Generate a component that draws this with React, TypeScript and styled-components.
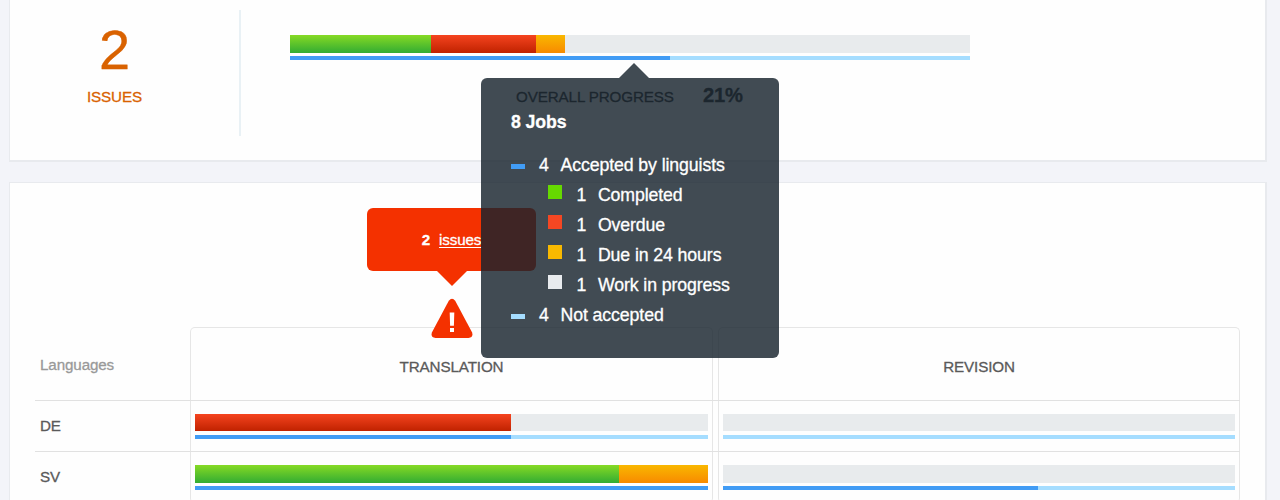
import React from "react";
import styled, { createGlobalStyle } from "styled-components";

const GlobalStyle = createGlobalStyle`
  * { box-sizing: border-box; }
  body {
    margin: 0;
    background: #f3f4f9;
    font-family: "Liberation Sans", Arial, Helvetica, sans-serif;
    font-size: 15.2px;
    letter-spacing: -0.12px;
    color: #5a5a5a;
    -webkit-text-stroke: 0.3px currentColor;
  }
`;

const fills = {
  done: "linear-gradient(#86da24, #32ac33)",
  late: "linear-gradient(#f5441f, #c02200)",
  soon: "linear-gradient(#f9b700, #f88a00)",
  open: "#e8ebed",
  accepted: "#419cf5",
  pending: "#a5ddff",
};
type Fill = keyof typeof fills;
type Part = [Fill, number];

const Page = styled.div`
  position: relative;
  height: 500px;
  overflow: hidden;
  padding: 0 13px 0 9px;
`;

const Card = styled.section`
  background: #fefefe;
  border: solid #e8eaee;
  border-width: 1px 2px 2px 1px;
`;

const SummaryCard = styled(Card)`
  display: flex;
  height: 162px;
  border-top: 0;
  padding-top: 10px;
`;

const IssueCount = styled.div`
  width: 231px;
  height: 126px;
  padding-right: 20px;
  border-right: 2px solid #e9f1f5;
  text-align: center;
  color: #d96200;
`;

const BigNumber = styled.div`
  font-size: 56px;
  line-height: 64px;
  padding-top: 8px;
  letter-spacing: 0;
`;

const IssueLabel = styled.div`
  line-height: 18px;
  margin-top: 6px;
`;

const Overall = styled.div`
  width: 680px;
  margin: 25px 0 0 49px;
`;

const OverallCaption = styled.div`
  display: flex;
  align-items: baseline;
  gap: 29px;
  margin: 23px 0 0 226px;
  line-height: 24px;
  color: #333;
  white-space: nowrap;
`;

const Percent = styled.strong`
  font-size: 20.2px;
`;

const Track = styled.div<{ $height: number }>`
  display: flex;
  height: ${(p) => p.$height}px;
`;

const Segment = styled.div<{ $fill: Fill; $grow: number }>`
  flex: ${(p) => p.$grow} 1 0;
  background: ${(p) => fills[p.$fill]};
`;

const BarPair = styled.div`
  display: flex;
  flex-direction: column;
  gap: 3.6px;
`;

function Progress({ work, acceptance }: { work: Part[]; acceptance: Part[] }) {
  return (
    <BarPair>
      <Track $height={17.75}>
        {work.map(([fill, grow]) => <Segment key={fill} $fill={fill} $grow={grow} />)}
      </Track>
      <Track $height={3.8}>
        {acceptance.map(([fill, grow]) => <Segment key={fill} $fill={fill} $grow={grow} />)}
      </Track>
    </BarPair>
  );
}

const TableCard = styled(Card)`
  height: 340px;
  margin-top: 20px;
  padding: 144px 0 0 25px;
`;

const Row = styled.div<{ $height: number; $line?: boolean }>`
  display: grid;
  grid-template-columns: 155px 523px 5px 522px;
  width: 1205px;
  height: ${(p) => p.$height}px;
  border-top: ${(p) => (p.$line ? "1px solid #e1e1e1" : "0")};
`;

const RowLabel = styled.div<{ $muted?: boolean }>`
  padding: ${(p) => (p.$muted ? "29px 0 0 5px" : "16px 0 0 5px")};
  line-height: 18px;
  color: ${(p) => (p.$muted ? "#999" : "#5a5a5a")};
`;

const Cell = styled.div<{ $last?: boolean }>`
  padding: 12.5px 4px 0;
  border: solid #e6e6e6;
  border-width: ${(p) => (p.$last ? "0 1px 1px" : "0 1px")};
  border-radius: ${(p) => (p.$last ? "0 0 5px 5px" : "0")};
`;

const HeadCell = styled(Cell)`
  padding-top: 30px;
  border-top-width: 1px;
  border-radius: 5px 5px 0 0;
  line-height: 18px;
  text-align: center;
`;

const Callout = styled.div`
  position: absolute;
  left: 367px;
  top: 208px;
  width: 169px;
  height: 62.5px;
  padding-top: 23px;
  border-radius: 6px;
  background: #f43100;
  color: #fff;
  line-height: 18px;
  display: flex;
  justify-content: center;
  gap: 9px;
  &::after {
    content: "";
    position: absolute;
    left: 69px;
    top: 62px;
    border: solid transparent;
    border-width: 16px 16px 0;
    border-top-color: #f43100;
  }
`;

const IssueLink = styled.a`
  text-decoration: underline;
  text-underline-offset: 2px;
  text-decoration-skip-ink: none;
`;

const Warning = styled.svg`
  position: absolute;
  left: 431px;
  top: 298px;
`;

const Tooltip = styled.div`
  position: absolute;
  left: 481px;
  top: 78px;
  width: 298px;
  height: 280px;
  padding: 29px 0 0 30px;
  border-radius: 6px;
  background: rgba(23, 35, 45, 0.82);
  color: #fff;
  font-size: 17.7px;
  letter-spacing: -0.09px;
  line-height: 30px;
  &::before {
    content: "";
    position: absolute;
    left: 137.5px;
    top: -15px;
    border: solid transparent;
    border-width: 0 15px 15px;
    border-bottom-color: rgba(23, 35, 45, 0.82);
  }
`;

const JobsTitle = styled.div`
  font-weight: bold;
  margin-bottom: 13px;
`;

const LegendRow = styled.div<{ $nested?: boolean }>`
  display: flex;
  height: 30px;
  padding-left: ${(p) => (p.$nested ? 37.4 : 0)}px;
  white-space: nowrap;
`;

const Swatch = styled.span<{ $color: string; $dash?: boolean }>`
  width: 14px;
  height: ${(p) => (p.$dash ? 5 : 14)}px;
  margin: ${(p) => (p.$dash ? 14 : 5)}px 14px 0 0;
  background: ${(p) => p.$color};
`;

const Count = styled.span`
  width: 21.5px;
`;

const legend = [
  { color: "#419cf5", count: 4, text: "Accepted by linguists" },
  { color: "#66d900", count: 1, text: "Completed", nested: true },
  { color: "#f54723", count: 1, text: "Overdue", nested: true },
  { color: "#f8b900", count: 1, text: "Due in 24 hours", nested: true },
  { color: "#e8ebee", count: 1, text: "Work in progress", nested: true },
  { color: "#a5ddff", count: 4, text: "Not accepted" },
];

export default function App() {
  return (
    <Page>
      <GlobalStyle />
      <SummaryCard>
        <IssueCount>
          <BigNumber>2</BigNumber>
          <IssueLabel>ISSUES</IssueLabel>
        </IssueCount>
        <Overall>
          <Progress
            work={[["done", 141], ["late", 105], ["soon", 29], ["open", 405]]}
            acceptance={[["accepted", 380], ["pending", 300]]}
          />
          <OverallCaption>
            <span>OVERALL PROGRESS</span>
            <Percent>21%</Percent>
          </OverallCaption>
        </Overall>
      </SummaryCard>
      <TableCard>
        <Row $height={73}>
          <RowLabel $muted>Languages</RowLabel>
          <HeadCell>TRANSLATION</HeadCell>
          <span />
          <HeadCell>REVISION</HeadCell>
        </Row>
        <Row $height={51.3} $line>
          <RowLabel>DE</RowLabel>
          <Cell>
            <Progress work={[["late", 316], ["open", 197]]} acceptance={[["accepted", 316], ["pending", 197]]} />
          </Cell>
          <span />
          <Cell>
            <Progress work={[["open", 1]]} acceptance={[["pending", 1]]} />
          </Cell>
        </Row>
        <Row $height={51.3} $line>
          <RowLabel>SV</RowLabel>
          <Cell $last>
            <Progress work={[["done", 424], ["soon", 89]]} acceptance={[["accepted", 1]]} />
          </Cell>
          <span />
          <Cell $last>
            <Progress work={[["open", 1]]} acceptance={[["accepted", 315], ["pending", 197]]} />
          </Cell>
        </Row>
      </TableCard>
      <Callout>
        <strong>2</strong>
        <IssueLink>issues</IssueLink>
      </Callout>
      <Warning width="42" height="41" viewBox="0 0 42 41">
        <path
          d="M17.8 2.7Q21 -1.2 24.2 2.7L41 34.2Q42.8 39.6 37.5 40H4.5Q-0.8 39.6 1 34.2Z"
          fill="#f43100"
        />
        <path d="M18.7 14.5h4.6l-.4 13.3h-3.8zM19 30h4v4h-4z" fill="#fff" />
      </Warning>
      <Tooltip>
        <JobsTitle>8 Jobs</JobsTitle>
        {legend.map((item) => (
          <LegendRow key={item.text} $nested={item.nested}>
            <Swatch $color={item.color} $dash={!item.nested} />
            <Count>{item.count}</Count>
            <span>{item.text}</span>
          </LegendRow>
        ))}
      </Tooltip>
    </Page>
  );
}
